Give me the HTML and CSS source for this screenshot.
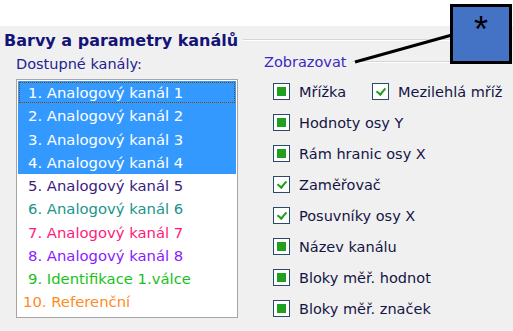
FILE: index.html
```html
<!DOCTYPE html>
<html lang="cs">
  <head>
    <title>Barvy a parametry kanálů</title>
    <meta charset="UTF-8" />
    <meta name="viewport" content="width=device-width, initial-scale=1.0" />
    <link rel="stylesheet" href="styles.css">
  </head>
  <body>
    <div class="top"></div>
    <div class="panel">
      <div class="group-head">
        <span class="group-title">Barvy a parametry kanálů</span>
        <span class="rule"></span>
      </div>
      <div class="group-body">
        <div class="channels">
          <div class="label">Dostupné kanály:</div>
          <ul class="listbox">
            <li class="sel focus">1. Analogový kanál 1</li>
            <li class="sel">2. Analogový kanál 2</li>
            <li class="sel">3. Analogový kanál 3</li>
            <li class="sel">4. Analogový kanál 4</li>
            <li class="c5">5. Analogový kanál 5</li>
            <li class="c6">6. Analogový kanál 6</li>
            <li class="c7">7. Analogový kanál 7</li>
            <li class="c8">8. Analogový kanál 8</li>
            <li class="c9">9. Identifikace 1.válce</li>
            <li class="c10 wide">10. Referenční</li>
          </ul>
        </div>
        <div class="display">
          <div class="sub-head">
            <span class="sub-title">Zobrazovat</span>
            <span class="rule"></span>
          </div>
          <div class="checks">
            <div class="check-row">
              <label class="check fixed"><span class="box fill"></span>Mřížka</label>
              <label class="check"><span class="box tick"></span>Mezilehlá mříž</label>
            </div>
            <div class="check-row">
              <label class="check"><span class="box fill"></span>Hodnoty osy Y</label>
            </div>
            <div class="check-row">
              <label class="check"><span class="box fill"></span>Rám hranic osy X</label>
            </div>
            <div class="check-row">
              <label class="check"><span class="box tick"></span>Zaměřovač</label>
            </div>
            <div class="check-row">
              <label class="check"><span class="box tick"></span>Posuvníky osy X</label>
            </div>
            <div class="check-row">
              <label class="check"><span class="box fill"></span>Název kanálu</label>
            </div>
            <div class="check-row">
              <label class="check"><span class="box fill"></span>Bloky měř. hodnot</label>
            </div>
            <div class="check-row">
              <label class="check"><span class="box fill"></span>Bloky měř. značek</label>
            </div>
          </div>
        </div>
      </div>
    </div>

    <!-- callout marker over the dialog -->
    <svg class="callout-line" width="513" height="331">
      <line x1="355" y1="62" x2="452" y2="35" stroke="#000" stroke-width="3" />
    </svg>
    <div class="callout">*</div>
  </body>
</html>
```

FILE: styles.css
```css
body {
  font-family: "DejaVu Sans", Verdana, sans-serif;
  font-size: 14.5px;
  margin: 0;
  width: 513px;
  height: 331px;
  overflow: hidden;
  background: #fff;
  position: relative;
}
.top {
  height: 26px;
}
.panel {
  height: 305px;
  background: #f0f0f0;
  padding-left: 4px;
}
.group-head {
  height: 28px;
  display: flex;
  align-items: center;
}
.group-title {
  font-weight: bold;
  font-size: 16px;
  color: #141478;
}
.rule {
  flex: 1;
  height: 1px;
  background: #d5d5d5;
  border-bottom: 1px solid #fff;
  margin-left: 5px;
  margin-right: 6px;
}
.group-body {
  display: flex;
}
.channels {
  margin-left: 12px;
  width: 222px;
}
.label {
  height: 20px;
  line-height: 20px;
  color: #23238f;
}
.listbox {
  list-style: none;
  margin: 5px 0 0;
  padding: 1px;
  height: 235px;
  background: #fff;
  border: 1px solid #a5a5a5;
  font-size: 14.8px;
}
.listbox li {
  height: 23.25px;
  line-height: 23px;
  padding-left: 10px;
  box-sizing: border-box;
}
.listbox li.wide {
  padding-left: 5px;
}
.listbox .sel {
  background: #3399ff;
  color: #fff;
}
.listbox .focus {
  outline: 1px dotted #7a4a00;
  outline-offset: -2px;
}
.c5 { color: #3d1a80; }
.c6 { color: #1a948a; }
.c7 { color: #ff1a7a; }
.c8 { color: #8a1aff; }
.c9 { color: #19c21a; }
.c10 { color: #ff8a26; }

.display {
  margin-left: 26px;
  flex: 1;
}
.sub-head {
  height: 16px;
  display: flex;
  align-items: center;
}
.sub-title {
  color: #3a2ac0;
}
.checks {
  margin-top: 6px;
  padding-left: 9px;
}
.check-row {
  height: 31px;
  display: flex;
  align-items: center;
}
.check {
  display: flex;
  align-items: center;
  color: #151545;
}
.check.fixed {
  width: 99px;
}
.box {
  width: 15px;
  height: 15px;
  border: 1px solid #2a4a6c;
  background: #fff;
  margin-right: 9px;
  position: relative;
}
.box.fill::after {
  content: "";
  position: absolute;
  left: 3px;
  top: 3px;
  width: 9px;
  height: 9px;
  background: #1fa01f;
}
.box.tick::after {
  content: "";
  position: absolute;
  left: 5px;
  top: 2px;
  width: 4px;
  height: 7px;
  border-right: 2px solid #1f9f1f;
  border-bottom: 2px solid #1f9f1f;
  transform: rotate(40deg);
}

.callout-line {
  position: absolute;
  left: 0;
  top: 0;
}
.callout {
  position: absolute;
  left: 450px;
  top: 4px;
  width: 56px;
  height: 54px;
  border: 3px solid #000;
  background: #4472c4;
  text-align: center;
  font-family: "Liberation Sans", Arial, sans-serif;
  font-size: 36px;
  line-height: 46px;
  color: #000;
}
```
